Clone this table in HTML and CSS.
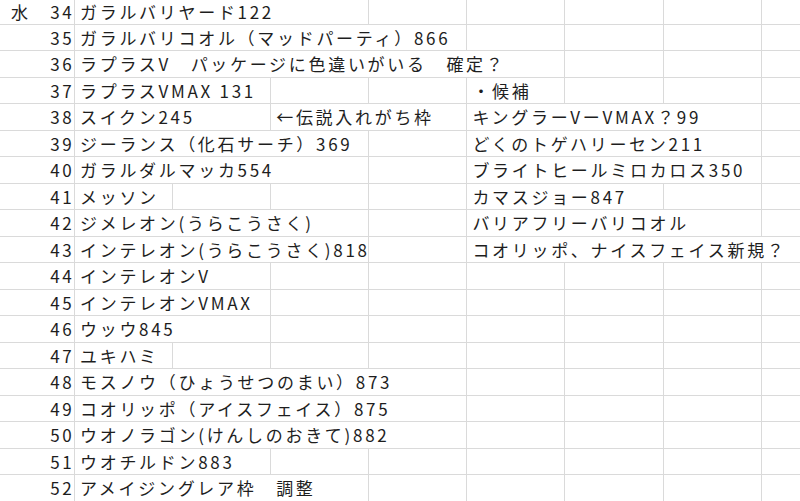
FILE: index.html
```html
<!DOCTYPE html>
<html lang="ja">
<head>
<meta charset="utf-8">
<title>シート</title>
<link rel="stylesheet" href="styles.css">
</head>
<body>
<div class="sheet">
  <!-- 34 -->
  <div class="c rh r1"><span class="day">水</span><span class="num">34</span></div>
  <div class="c s3 r1">ガラルバリヤード122</div><div class="c r1"></div><div class="c r1"></div><div class="c r1"></div><div class="c r1"></div><div class="c r1 e"></div>
  <!-- 35 -->
  <div class="c rh"><span class="day"></span><span class="num">35</span></div>
  <div class="c s4">ガラルバリコオル（マッドパーティ）866</div><div class="c"></div><div class="c"></div><div class="c"></div><div class="c e"></div>
  <!-- 36 -->
  <div class="c rh"><span class="day"></span><span class="num">36</span></div>
  <div class="c s5">ラプラスV　パッケージに色違いがいる　確定？</div><div class="c"></div><div class="c"></div><div class="c e"></div>
  <!-- 37 -->
  <div class="c rh"><span class="day"></span><span class="num">37</span></div>
  <div class="c s2">ラプラスVMAX 131</div><div class="c"></div><div class="c"></div><div class="c">・候補</div><div class="c"></div><div class="c"></div><div class="c e"></div>
  <!-- 38 -->
  <div class="c rh"><span class="day"></span><span class="num">38</span></div>
  <div class="c s2">スイクン245</div><div class="c s2">←伝説入れがち枠</div><div class="c s3">キングラーVーVMAX？99</div><div class="c e"></div>
  <!-- 39 -->
  <div class="c rh"><span class="day"></span><span class="num">39</span></div>
  <div class="c s3">ジーランス（化石サーチ）369</div><div class="c"></div><div class="c s3">どくのトゲハリーセン211</div><div class="c e"></div>
  <!-- 40 -->
  <div class="c rh"><span class="day"></span><span class="num">40</span></div>
  <div class="c s3">ガラルダルマッカ554</div><div class="c"></div><div class="c s3">ブライトヒールミロカロス350</div><div class="c e"></div>
  <!-- 41 -->
  <div class="c rh"><span class="day"></span><span class="num">41</span></div>
  <div class="c">メッソン</div><div class="c"></div><div class="c"></div><div class="c"></div><div class="c s2">カマスジョー847</div><div class="c"></div><div class="c e"></div>
  <!-- 42 -->
  <div class="c rh"><span class="day"></span><span class="num">42</span></div>
  <div class="c s3">ジメレオン(うらこうさく)</div><div class="c"></div><div class="c s3">バリアフリーバリコオル</div><div class="c e"></div>
  <!-- 43 -->
  <div class="c rh"><span class="day"></span><span class="num">43</span></div>
  <div class="c s3">インテレオン(うらこうさく)818</div><div class="c"></div><div class="c s4 e">コオリッポ、ナイスフェイス新規？</div>
  <!-- 44 -->
  <div class="c rh"><span class="day"></span><span class="num">44</span></div>
  <div class="c s2">インテレオンV</div><div class="c"></div><div class="c"></div><div class="c"></div><div class="c"></div><div class="c"></div><div class="c e"></div>
  <!-- 45 -->
  <div class="c rh"><span class="day"></span><span class="num">45</span></div>
  <div class="c s2">インテレオンVMAX</div><div class="c"></div><div class="c"></div><div class="c"></div><div class="c"></div><div class="c"></div><div class="c e"></div>
  <!-- 46 -->
  <div class="c rh"><span class="day"></span><span class="num">46</span></div>
  <div class="c s2">ウッウ845</div><div class="c"></div><div class="c"></div><div class="c"></div><div class="c"></div><div class="c"></div><div class="c e"></div>
  <!-- 47 -->
  <div class="c rh"><span class="day"></span><span class="num">47</span></div>
  <div class="c">ユキハミ</div><div class="c"></div><div class="c"></div><div class="c"></div><div class="c"></div><div class="c"></div><div class="c"></div><div class="c e"></div>
  <!-- 48 -->
  <div class="c rh"><span class="day"></span><span class="num">48</span></div>
  <div class="c s4">モスノウ（ひょうせつのまい）873</div><div class="c"></div><div class="c"></div><div class="c"></div><div class="c e"></div>
  <!-- 49 -->
  <div class="c rh"><span class="day"></span><span class="num">49</span></div>
  <div class="c s4">コオリッポ（アイスフェイス）875</div><div class="c"></div><div class="c"></div><div class="c"></div><div class="c e"></div>
  <!-- 50 -->
  <div class="c rh"><span class="day"></span><span class="num">50</span></div>
  <div class="c s4">ウオノラゴン(けんしのおきて)882</div><div class="c"></div><div class="c"></div><div class="c"></div><div class="c e"></div>
  <!-- 51 -->
  <div class="c rh"><span class="day"></span><span class="num">51</span></div>
  <div class="c s2">ウオチルドン883</div><div class="c"></div><div class="c"></div><div class="c"></div><div class="c"></div><div class="c"></div><div class="c e"></div>
  <!-- 52 -->
  <div class="c rh"><span class="day"></span><span class="num">52</span></div>
  <div class="c s3">アメイジングレア枠　調整</div><div class="c"></div><div class="c"></div><div class="c"></div><div class="c"></div><div class="c e"></div>
</div>
</body>
</html>
```

FILE: styles.css
```css
html, body {
  margin: 0;
  padding: 0;
  background: #ffffff;
  overflow: hidden;
}

body {
  width: 800px;
  height: 501px;
  font-family: "Noto Sans CJK JP", "Noto Sans", sans-serif;
  font-size: 17px;
  letter-spacing: 2.7px;
  color: #1e1e1e;
}

.sheet {
  display: grid;
  grid-template-columns: 75px repeat(7, 98.1px) 1fr;
  grid-template-rows: 24.5px;
  grid-auto-rows: 26.5px;
  width: 800px;
}

.c {
  box-sizing: border-box;
  border-right: 1px solid #dadada;
  border-bottom: 1px solid #dadada;
  padding-left: 5px;
  line-height: 25.5px;
  white-space: nowrap;
  overflow: visible;
}

.e {
  border-right: none;
}

.r1 {
  line-height: 23.5px;
}

.s2 { grid-column: span 2; }
.s3 { grid-column: span 3; }
.s4 { grid-column: span 4; }
.s5 { grid-column: span 5; }

.rh {
  display: flex;
  justify-content: space-between;
  padding-left: 11px;
  padding-right: 0;
}

.num {
  letter-spacing: 2.4px;
}

.day {
  letter-spacing: 0;
}
```
